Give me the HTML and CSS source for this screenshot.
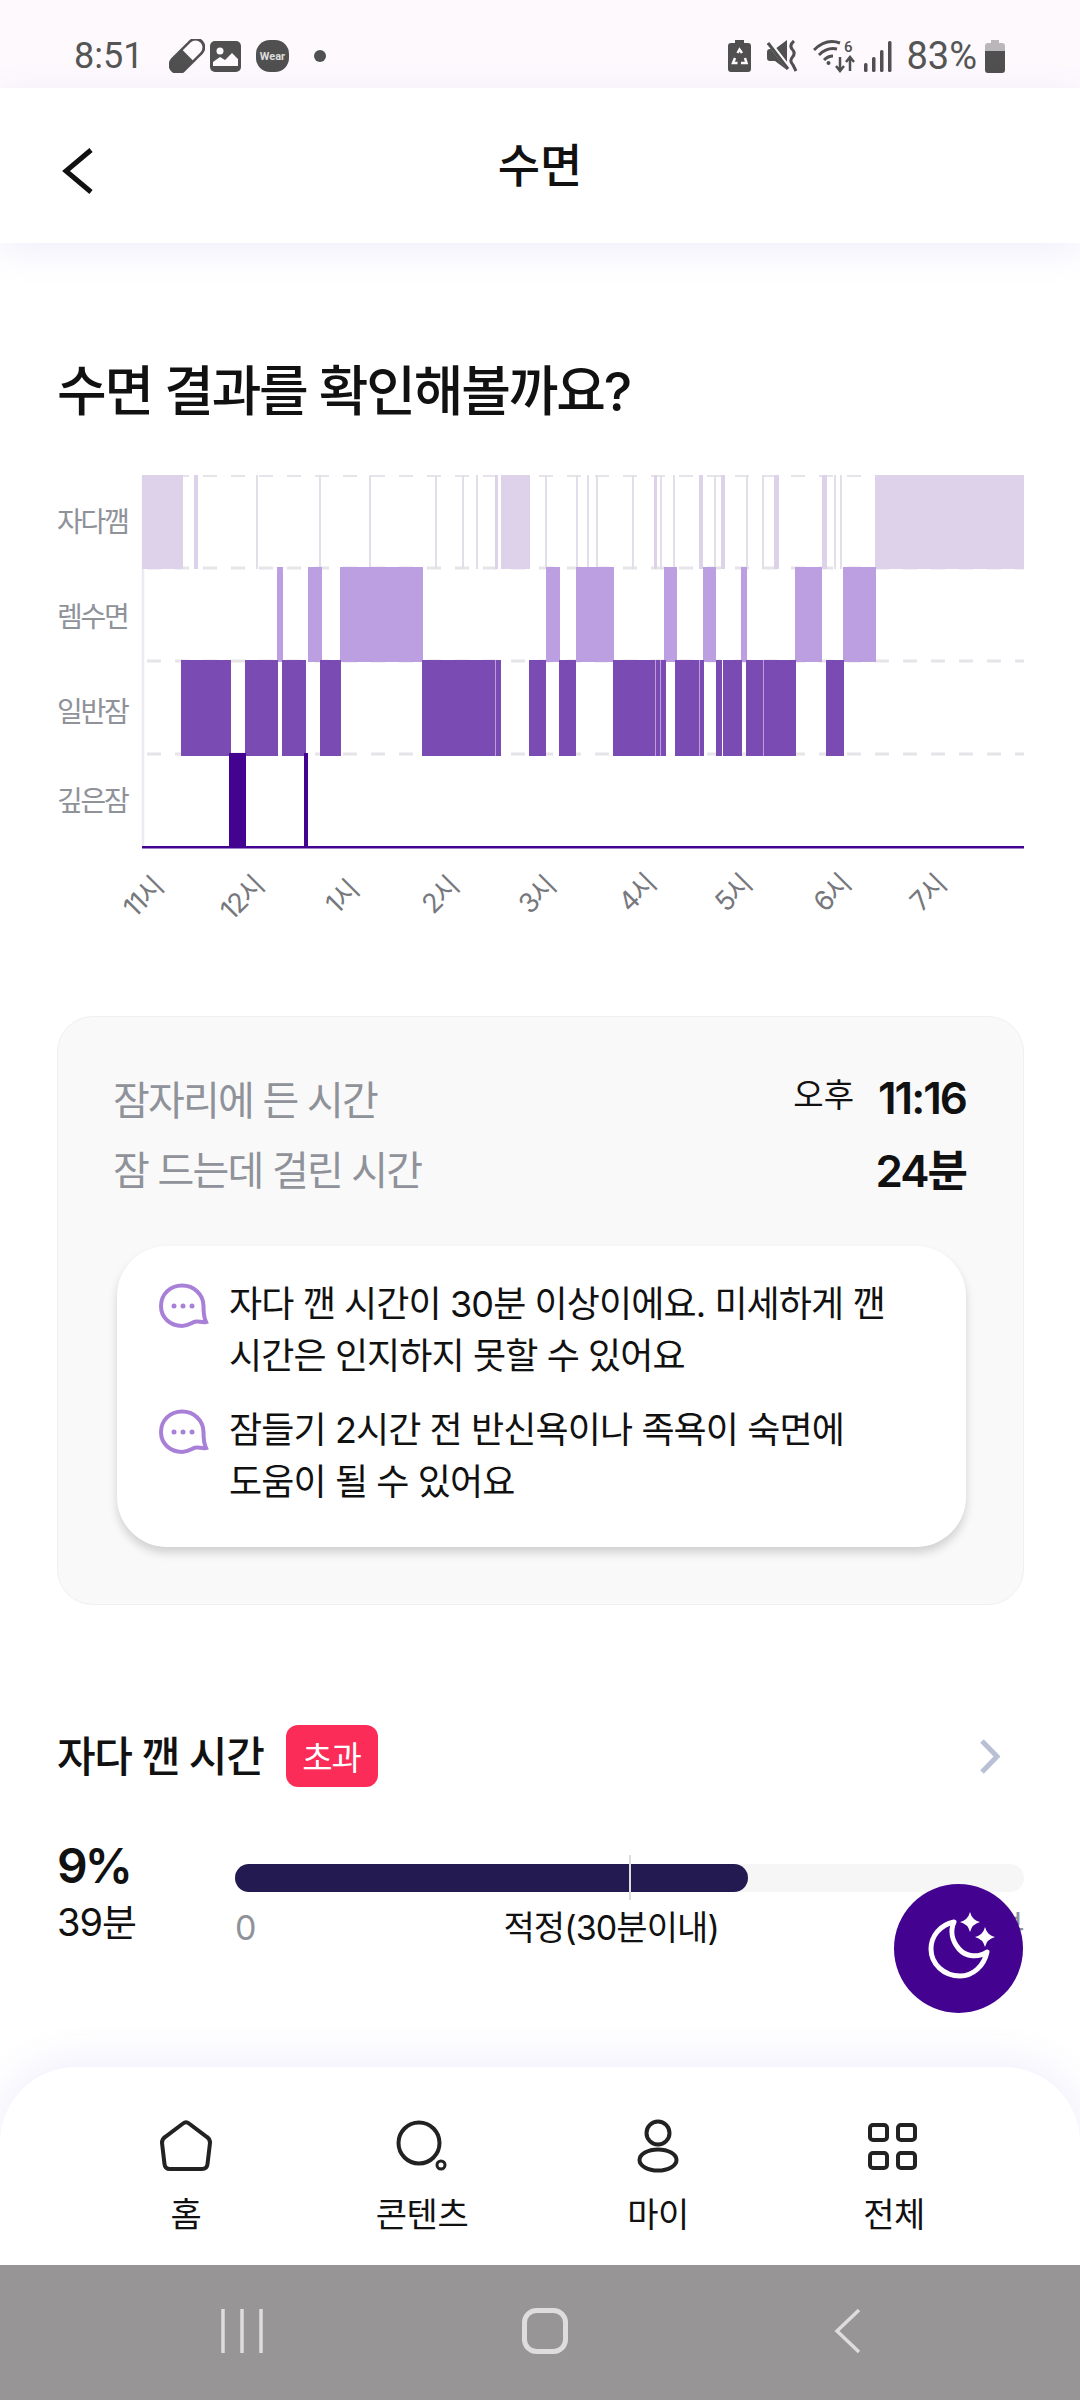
FILE: index.html
```html
<!DOCTYPE html>
<html lang="ko">
<head>
    <meta charset="UTF-8">
    <meta name="viewport" content="width=device-width, initial-scale=1.0">
    <title>수면</title>
    <link rel="stylesheet" href="styles.css">
</head>
<body>
<div class="screen">
    <!-- Status bar -->
    <div class="status">
        <div class="status-side">
            <span class="clock">8:51</span>
            <svg class="ic-pill" width="36" height="34" viewBox="0 0 36 34"><g transform="rotate(-45 18 17)"><rect x="-4" y="7.500" width="44" height="19" rx="9.500" fill="#505050"/><path d="M19 10 H30 a7 7 0 0 1 0 14 H19 Z" fill="#fdf9fd"/></g></svg>
            <svg class="ic-photo" width="31" height="31" viewBox="0 0 31 31"><rect width="31" height="31" rx="5" fill="#505050"/><circle cx="10" cy="10" r="3.500" fill="#fdf9fd"/><path d="M3 25 V21 L10 16 L15 19 L22 12 L28 18 V25 Z" fill="#fdf9fd"/></svg>
            <svg class="ic-wear" width="33" height="32" viewBox="0 0 33 32"><rect width="33" height="32" rx="14" fill="#505050"/><text x="16.500" y="20" class="wear-text">Wear</text></svg>
            <span class="status-dot"></span>
        </div>
        <div class="status-side">
            <svg class="ic-saver" width="23" height="32" viewBox="0 0 23 32"><path d="M7 0 H16 V3 H20 a3 3 0 0 1 3 3 V29 a3 3 0 0 1 -3 3 H3 a3 3 0 0 1 -3 -3 V6 a3 3 0 0 1 3 -3 H7 Z" fill="#505050"/><path d="M9.500 13 L11.500 9.500 L14 13 M17 18 L18.500 23 H13 M9.500 23 H5 L7 18" stroke="#fdf9fd" stroke-width="2.500" fill="none"/></svg>
            <svg class="ic-mute" width="31" height="32" viewBox="0 0 31 32"><path d="M0 12 Q0 9 3 9 H8 L20 0 V30 L8 21 H3 Q0 21 0 18 Z" fill="#505050"/><path d="M0 0 L24 31" stroke="#fdf9fd" stroke-width="5"/><path d="M1 3 L21 29" stroke="#505050" stroke-width="3"/><path d="M27 1 Q22 5 25 9 Q29 13 25.500 17 Q22 21 26 25 L29 31" stroke="#505050" stroke-width="3" fill="none"/></svg>
            <svg class="ic-wifi" width="43" height="34" viewBox="0 0 43 34"><path d="M1 11 Q13 -1 27 4 M6 16 Q14 8 24 10 M11 21 Q15 17 20 17" stroke="#505050" stroke-width="3" fill="none"/><circle cx="15.500" cy="24" r="2" fill="#505050"/><text x="31" y="13" class="wifi-six">6</text><path d="M27 18 V32 M23 27 L27 32 L31 27 M37 32 V18 M33 23 L37 18 L41 23" stroke="#505050" stroke-width="2.500" fill="none"/></svg>
            <svg class="ic-signal" width="28" height="32" viewBox="0 0 28 32"><rect x="0" y="23" width="3.500" height="9" rx="1.500" fill="#505050"/><rect x="8" y="17" width="3.500" height="15" rx="1.500" fill="#505050"/><rect x="16" y="10" width="3.500" height="22" rx="1.500" fill="#505050"/><rect x="24" y="1" width="3.500" height="31" rx="1.500" fill="#505050"/></svg>
            <span class="percent">83%</span>
            <svg class="ic-battery" width="20" height="33" viewBox="0 0 20 33"><path d="M6 0 H14 V3 H17 a3 3 0 0 1 3 3 V12 H0 V6 a3 3 0 0 1 3 -3 H6 Z" fill="#b9b7b9"/><path d="M0 11 H20 V30 a3 3 0 0 1 -3 3 H3 a3 3 0 0 1 -3 -3 Z" fill="#505050"/></svg>
        </div>
    </div>

    <!-- Header -->
    <header class="topbar">
        <svg class="back" width="34" height="48" viewBox="0 0 34 48"><path d="M30 3 L5 24 L30 45" class="back-line"/></svg>
        <h1 class="page-title">수면</h1>
    </header>

    <main class="content">
        <h2 class="result-title">수면 결과를 확인해볼까요?</h2>

        <!-- Sleep stage chart, viewBox uses screen coordinates -->
        <svg class="chart" width="967" height="470" viewBox="57 460 967 470">
            <g class="grid-lines">
                <line class="grid-top" x1="147" y1="476" x2="1024" y2="476"/>
                <line x1="147" y1="568" x2="1024" y2="568"/>
                <line x1="147" y1="661" x2="1024" y2="661"/>
                <line x1="147" y1="754" x2="1024" y2="754"/>
            </g>
            <line class="axis" x1="143" y1="475" x2="143" y2="847"/>

            <g class="awake">
                <rect x="142" y="475" width="41" height="94"/>
                <rect x="194" y="475" width="4" height="94"/>
                <rect x="256" y="475" width="2" height="94"/>
                <rect x="319" y="475" width="2" height="94"/>
                <rect x="369" y="475" width="2" height="94"/>
                <rect x="435" y="475" width="2" height="94"/>
                <rect x="462" y="475" width="2" height="94"/>
                <rect x="476" y="475" width="2" height="94"/>
                <rect x="495" y="475" width="3" height="94"/>
                <rect x="501" y="475" width="29" height="94"/>
                <rect x="545" y="475" width="2" height="94"/>
                <rect x="576" y="475" width="2" height="94"/>
                <rect x="587" y="475" width="2" height="94"/>
                <rect x="596" y="475" width="2" height="94"/>
                <rect x="632" y="475" width="2" height="94"/>
                <rect x="654" y="475" width="3" height="94"/>
                <rect x="660" y="475" width="2" height="94"/>
                <rect x="673" y="475" width="2" height="94"/>
                <rect x="699" y="475" width="4" height="94"/>
                <rect x="714" y="475" width="2" height="94"/>
                <rect x="721" y="475" width="4" height="94"/>
                <rect x="746" y="475" width="2" height="94"/>
                <rect x="762" y="475" width="2" height="94"/>
                <rect x="774" y="475" width="5" height="94"/>
                <rect x="822" y="475" width="5" height="94"/>
                <rect x="834" y="475" width="2" height="94"/>
                <rect x="840" y="475" width="2" height="94"/>
                <rect x="875" y="475" width="149" height="94"/>
            </g>
            <g class="rem">
                <rect x="277" y="567" width="6" height="95"/>
                <rect x="308" y="567" width="14" height="95"/>
                <rect x="340" y="567" width="83" height="95"/>
                <rect x="546" y="567" width="14" height="95"/>
                <rect x="576" y="567" width="38" height="95"/>
                <rect x="664" y="567" width="13" height="95"/>
                <rect x="703" y="567" width="13" height="95"/>
                <rect x="741" y="567" width="6" height="95"/>
                <rect x="795" y="567" width="27" height="95"/>
                <rect x="843" y="567" width="33" height="95"/>
            </g>
            <g class="light">
                <rect x="181" y="660" width="50" height="96"/>
                <rect x="245" y="660" width="33" height="96"/>
                <rect x="282" y="660" width="24" height="96"/>
                <rect x="320" y="660" width="21" height="96"/>
                <rect x="422" y="660" width="79" height="96"/>
                <rect x="529" y="660" width="17" height="96"/>
                <rect x="559" y="660" width="17" height="96"/>
                <rect x="613" y="660" width="53" height="96"/>
                <rect x="675" y="660" width="29" height="96"/>
                <rect x="716" y="660" width="6" height="96"/>
                <rect x="723" y="660" width="19" height="96"/>
                <rect x="746" y="660" width="50" height="96"/>
                <rect x="826" y="660" width="18" height="96"/>
            </g>
            <g class="seams">
                <rect x="495" y="660" width="1" height="96"/>
                <rect x="655" y="660" width="1" height="96"/>
                <rect x="660" y="660" width="1" height="96"/>
                <rect x="699" y="660" width="1" height="96"/>
                <rect x="763" y="660" width="1" height="96"/>
            </g>
            <g class="deep">
                <rect x="229" y="753" width="17" height="94"/>
                <rect x="304" y="753" width="4" height="94"/>
                <rect x="142" y="846" width="882" height="2.500"/>
            </g>

            <g class="stage-labels">
                <text x="57" y="532">자다깸</text>
                <text x="57" y="627">렘수면</text>
                <text x="57" y="722">일반잠</text>
                <text x="57" y="811">깊은잠</text>
            </g>
            <g class="hour-labels">
                <text x="143" y="897" transform="rotate(-45 143 897)">11시</text>
                <text x="242" y="898" transform="rotate(-45 242 898)">12시</text>
                <text x="342" y="897" transform="rotate(-45 342 897)">1시</text>
                <text x="440" y="895" transform="rotate(-45 440 895)">2시</text>
                <text x="537" y="895" transform="rotate(-45 537 895)">3시</text>
                <text x="637" y="893" transform="rotate(-45 637 893)">4시</text>
                <text x="733" y="893" transform="rotate(-45 733 893)">5시</text>
                <text x="832" y="893" transform="rotate(-45 832 893)">6시</text>
                <text x="928" y="893" transform="rotate(-45 928 893)">7시</text>
            </g>
        </svg>

        <!-- Summary card -->
        <section class="card">
            <div class="card-row">
                <span class="card-label">잠자리에 든 시간</span>
                <span class="card-value"><small>오후</small>11:16</span>
            </div>
            <div class="card-row">
                <span class="card-label">잠 드는데 걸린 시간</span>
                <span class="card-value">24분</span>
            </div>
            <div class="tips">
                <div class="tip">
                    <svg class="bubble" width="50" height="46" viewBox="0 0 50 46"><path d="M23 2.500 C11 2.500 2 11.500 2 23 S11 43 23 43 C30 43 33 39 37 38.500 C40 38 43 40 47 39 C45 35 44.500 31 44.500 23 C44.500 11.500 35 2.500 23 2.500 Z"/><circle cx="15" cy="23" r="2.500"/><circle cx="24" cy="23" r="2.500"/><circle cx="33" cy="23" r="2.500"/></svg>
                    <p>자다 깬 시간이 30분 이상이에요. 미세하게 깬<br>시간은 인지하지 못할 수 있어요</p>
                </div>
                <div class="tip">
                    <svg class="bubble" width="50" height="46" viewBox="0 0 50 46"><path d="M23 2.500 C11 2.500 2 11.500 2 23 S11 43 23 43 C30 43 33 39 37 38.500 C40 38 43 40 47 39 C45 35 44.500 31 44.500 23 C44.500 11.500 35 2.500 23 2.500 Z"/><circle cx="15" cy="23" r="2.500"/><circle cx="24" cy="23" r="2.500"/><circle cx="33" cy="23" r="2.500"/></svg>
                    <p>잠들기 2시간 전 반신욕이나 족욕이 숙면에<br>도움이 될 수 있어요</p>
                </div>
            </div>
        </section>

        <!-- Awake time -->
        <div class="section-head">
            <h3>자다 깬 시간</h3>
            <span class="badge">초과</span>
            <svg class="more" width="21" height="35" viewBox="0 0 21 35"><path d="M3 2 L18 17.500 L3 33"/></svg>
        </div>
        <div class="metric">
            <div class="metric-left">
                <div class="metric-pct">9%</div>
                <div class="metric-min">39분</div>
            </div>
            <div class="metric-right">
                <div class="track">
                    <div class="fill" style="width: 65%"></div>
                    <span class="marker"></span>
                </div>
                <div class="scale">
                    <span class="scale-end">0</span>
                    <span class="scale-mid">적정(30분이내)</span>
                    <span class="scale-end">60분</span>
                </div>
            </div>
        </div>
    </main>

    <!-- Floating sleep button -->
    <button class="fab">
        <svg width="129" height="129" viewBox="0 0 129 129">
            <path class="moon" d="M60 38 C46 41 37 52 37 65 C37 80 50 92 66 92 C79 92 90 82 93 68 C84 74 72 73 65 65 C58 57 56 47 60 38 Z"/>
            <path class="star" d="M76 28 Q78 36 86 38 Q78 40 76 48 Q74 40 66 38 Q74 36 76 28 Z"/>
            <path class="star" d="M91 43 Q93 51 101 53 Q93 55 91 63 Q89 55 81 53 Q89 51 91 43 Z"/>
        </svg>
    </button>

    <!-- Bottom tabs -->
    <nav class="tabs">
        <div class="tab">
            <svg width="60" height="56" viewBox="0 0 60 56"><path d="M27 5.500 Q30 3 33 5.500 L51 19 Q54 21 54 25 L51.500 46 Q51 51 46 51 H14 Q9 51 8.500 46 L6 25 Q6 21 9 19 Z"/></svg>
            <span>홈</span>
        </div>
        <div class="tab">
            <svg width="60" height="56" viewBox="0 0 60 56"><circle cx="27" cy="25" r="20.500"/><circle class="thin" cx="49" cy="47" r="4"/></svg>
            <span>콘텐츠</span>
        </div>
        <div class="tab">
            <svg width="60" height="56" viewBox="0 0 60 56"><circle cx="30" cy="15" r="11.500"/><ellipse cx="30" cy="42" rx="18.500" ry="10.500"/></svg>
            <span>마이</span>
        </div>
        <div class="tab">
            <svg width="60" height="56" viewBox="0 0 60 56"><rect x="6" y="7" width="17" height="15" rx="3"/><rect x="34" y="7" width="17" height="15" rx="3"/><rect x="6" y="35" width="17" height="15" rx="3"/><rect x="34" y="35" width="17" height="15" rx="3"/></svg>
            <span>전체</span>
        </div>
    </nav>

    <!-- Android navigation -->
    <div class="sysnav">
        <svg width="44" height="46" viewBox="0 0 44 46"><path d="M3 1 V45 M22 1 V45 M41 1 V45"/></svg>
        <svg width="46" height="46" viewBox="0 0 46 46"><rect class="sys-home" x="2.500" y="2.500" width="41" height="41" rx="12"/></svg>
        <svg width="27" height="46" viewBox="0 0 27 46"><path d="M25 2 L3 23 L25 44"/></svg>
    </div>
</div>
</body>
</html>
```

FILE: styles.css
```css
/* Global */
* {
    box-sizing: border-box;
}

body {
    margin: 0;
    background: #fff;
    color: #111;
    font-family: Inter, "Noto Sans CJK KR", sans-serif;
}

.screen {
    position: relative;
    display: flex;
    flex-direction: column;
    width: 1080px;
    height: 2400px;
    overflow: hidden;
}

/* Status bar */
.status {
    display: flex;
    justify-content: space-between;
    align-items: center;
    height: 88px;
    padding: 24px 75px 0 74px;
    background: #fdf9fd;
    color: #555;
    font-family: Roboto, sans-serif;
}

.status-side {
    display: flex;
    align-items: center;
}

.clock {
    font-size: 36px;
    width: 95px;
}

.percent {
    font-size: 38px;
    margin: 0 8px 0 14px;
}

.ic-photo {
    margin-left: 5px;
}

.ic-wear {
    margin-left: 15px;
}

.status-dot {
    width: 12px;
    height: 12px;
    margin-left: 25px;
    border-radius: 50%;
    background: #505050;
}

.ic-mute {
    margin-left: 16px;
}

.ic-wifi {
    margin-left: 15px;
}

.ic-signal {
    margin-left: 8px;
}

.wear-text {
    font-family: Roboto, sans-serif;
    font-size: 11px;
    font-weight: 700;
    fill: #ddd;
    text-anchor: middle;
}

.wifi-six {
    font-family: Roboto, sans-serif;
    font-size: 15px;
    font-weight: 500;
    fill: #505050;
}

/* Header */
.topbar {
    position: relative;
    z-index: 2;
    display: flex;
    align-items: center;
    justify-content: center;
    height: 155px;
    background: #fff;
    box-shadow: 0 8px 34px rgba(96, 86, 220, 0.1);
}

.back {
    position: absolute;
    left: 61px;
    top: 59px;
}

.back-line {
    fill: none;
    stroke: #111;
    stroke-width: 5;
}

.page-title {
    margin: 0;
    padding-bottom: 2px;
    font-size: 46px;
    font-weight: 500;
    line-height: 1;
}

/* Main scroll area */
.content {
    flex: 1;
    min-height: 0;
    overflow: hidden;
    padding: 0 56px 0 57px;
}

.result-title {
    margin: 119px 0 0;
    font-size: 54px;
    font-weight: 500;
    line-height: 60px;
    letter-spacing: -2.2px;
}

/* Chart */
.chart {
    display: block;
    margin-top: 38px;
}

.grid-lines line {
    stroke: #e6e4e9;
    stroke-width: 3;
    stroke-dasharray: 14 14;
}

.grid-lines .grid-top {
    stroke-width: 2;
}

.axis {
    stroke: #ecebf2;
    stroke-width: 2.5;
}

.awake rect {
    fill: #ded2eb;
}

/* hairline wake-ups read greyer than the wide blocks */
.awake rect[width="2"] {
    fill: #e2deea;
}

.rem rect {
    fill: #bb9fe0;
}

.light rect {
    fill: #7a4bb2;
}

.seams rect {
    fill: #b9a0dc;
}

.deep rect {
    fill: #43028f;
}

.stage-labels text {
    font-size: 28px;
    letter-spacing: -2.2px;
    fill: #8f9299;
}

.hour-labels text {
    font-size: 27px;
    letter-spacing: -1.5px;
    fill: #77787d;
    text-anchor: middle;
    dominant-baseline: central;
}

/* Summary card */
.card {
    height: 589px;
    margin-top: 86px;
    padding: 53px 57px 0 55px;
    border: 1px solid #efefef;
    border-radius: 36px;
    background: #f9f9f9;
}

.card-row {
    display: flex;
    justify-content: space-between;
    align-items: center;
    height: 56px;
    margin-bottom: 14px;
}

.card-label {
    font-size: 40px;
    letter-spacing: -1.8px;
    color: #8f9299;
}

.card-value {
    font-size: 44px;
    font-weight: 600;
    letter-spacing: -2px;
}

.card-value small {
    position: relative;
    top: -7px;
    margin-right: 24px;
    font-size: 33px;
    font-weight: 400;
    letter-spacing: 0;
}

.tips {
    margin: 50px 0 0 4px;
    padding: 32px 20px 39px 42px;
    border-radius: 50px;
    background: #fff;
    box-shadow: 0 6px 10px rgba(0, 0, 0, 0.16);
}

.tip {
    display: flex;
    gap: 20px;
    margin-bottom: 22px;
}

.tip:last-child {
    margin-bottom: 0;
}

.tip p {
    margin: 0;
    font-size: 36px;
    line-height: 52px;
    letter-spacing: -0.9px;
}

.bubble {
    flex: none;
    margin-top: 5px;
}

.bubble path {
    fill: none;
    stroke: #a880d8;
    stroke-width: 4;
}

.bubble circle {
    fill: #a880d8;
}

/* Awake time section */
.section-head {
    display: flex;
    align-items: center;
    height: 62px;
    margin-top: 120px;
}

.section-head h3 {
    margin: 0 0 6px;
    font-size: 42px;
    font-weight: 500;
    letter-spacing: -1.3px;
}

.badge {
    display: flex;
    align-items: center;
    justify-content: center;
    width: 92px;
    height: 62px;
    margin-left: 22px;
    border-radius: 12px;
    background: #fb2c57;
    color: #fff;
    font-size: 33px;
    letter-spacing: -1px;
}

.more {
    margin: 0 24px 0 auto;
}

.more path {
    fill: none;
    stroke: #b9c0d6;
    stroke-width: 5;
}

.metric {
    display: grid;
    grid-template-columns: 178px 1fr;
    margin-top: 51px;
}

.metric-pct {
    font-size: 48px;
    font-weight: 600;
    line-height: 56px;
    letter-spacing: -3px;
}

.metric-min {
    margin-top: 4px;
    font-size: 38px;
    line-height: 48px;
    letter-spacing: -1px;
}

.metric-right {
    padding-top: 26px;
}

.track {
    position: relative;
    height: 28px;
    border-radius: 14px;
    background: #f6f6f6;
}

.fill {
    height: 100%;
    border-radius: 14px;
    background: #231a51;
}

.marker {
    position: absolute;
    left: 394px;
    top: -9px;
    width: 2px;
    height: 45px;
    background: #ddd;
}

.scale {
    display: flex;
    justify-content: space-between;
    margin-top: 14px;
    font-size: 34px;
    line-height: 44px;
    letter-spacing: -0.9px;
}

.scale-mid {
    margin-left: 14px;
}

.scale-end {
    color: #8f9299;
}

/* Floating button */
.fab {
    position: absolute;
    right: 57px;
    bottom: 387px;
    z-index: 3;
    width: 129px;
    height: 129px;
    padding: 0;
    border: none;
    border-radius: 50%;
    background: #43028f;
}

.fab svg {
    display: block;
}

.moon {
    fill: none;
    stroke: #fff;
    stroke-width: 5;
    stroke-linejoin: round;
}

.star {
    fill: #fff;
}

/* Bottom tabs */
.tabs {
    position: relative;
    z-index: 2;
    display: grid;
    grid-template-columns: repeat(4, 236px);
    height: 198px;
    padding: 51px 68px 0;
    border-radius: 76px 76px 0 0;
    background: #fff;
    box-shadow: 0 -6px 40px rgba(96, 86, 220, 0.1);
}

.tab {
    display: flex;
    flex-direction: column;
    align-items: center;
}

.tab svg {
    fill: none;
    stroke: #222;
    stroke-width: 4;
}

.tab svg .thin {
    stroke-width: 3;
}

.tab span {
    margin-top: 19px;
    font-size: 34px;
    line-height: 44px;
    letter-spacing: -0.5px;
}

/* System navigation */
.sysnav {
    position: relative;
    z-index: 2;
    display: grid;
    grid-template-columns: repeat(3, 303px);
    justify-items: center;
    height: 135px;
    padding: 43px 0 0 90px;
    background: #989596;
}

.sysnav svg {
    fill: none;
    stroke: #dedcdd;
    stroke-width: 3.5;
}

.sysnav .sys-home {
    stroke-width: 5;
}
```
